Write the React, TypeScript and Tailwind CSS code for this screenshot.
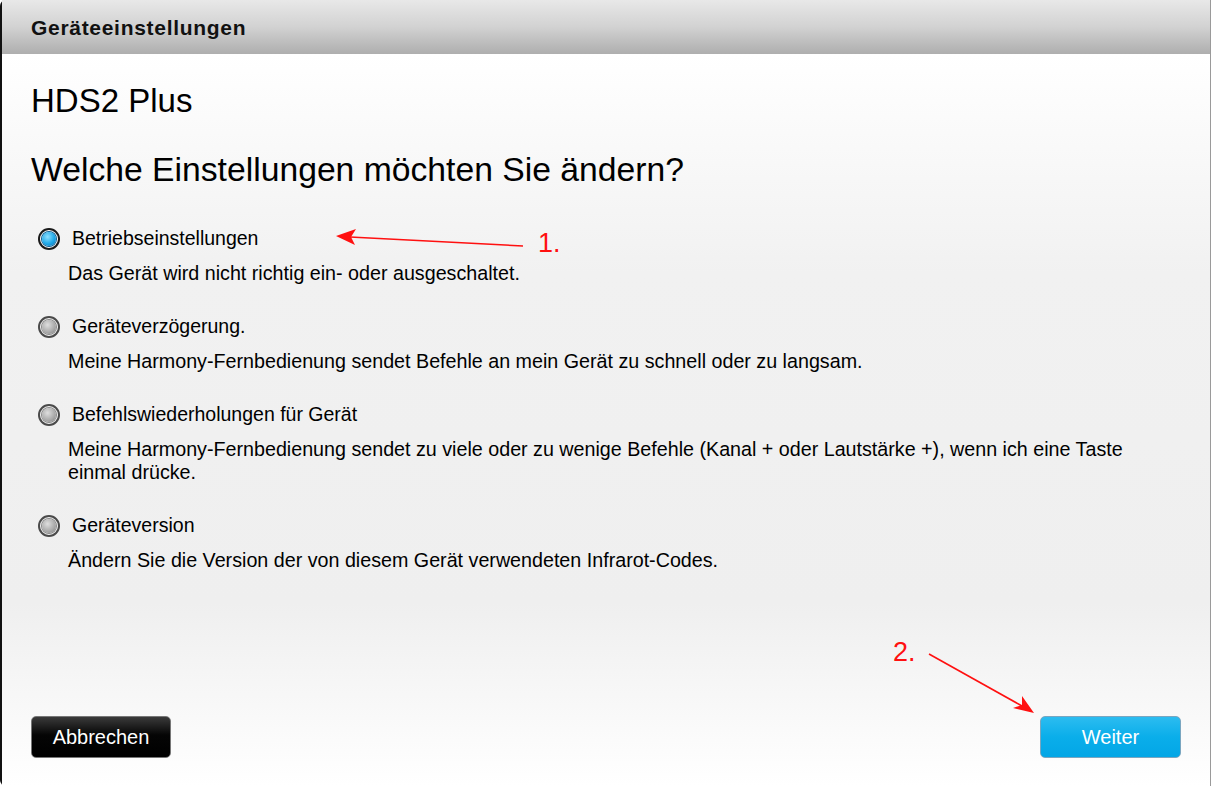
import React from "react";

type Option = {
  label: string;
  desc: string;
  selected?: boolean;
};

const options: Option[] = [
  {
    label: "Betriebseinstellungen",
    desc: "Das Gerät wird nicht richtig ein- oder ausgeschaltet.",
    selected: true,
  },
  {
    label: "Geräteverzögerung.",
    desc: "Meine Harmony-Fernbedienung sendet Befehle an mein Gerät zu schnell oder zu langsam.",
  },
  {
    label: "Befehlswiederholungen für Gerät",
    desc: "Meine Harmony-Fernbedienung sendet zu viele oder zu wenige Befehle (Kanal + oder Lautstärke +), wenn ich eine Taste einmal drücke.",
  },
  {
    label: "Geräteversion",
    desc: "Ändern Sie die Version der von diesem Gerät verwendeten Infrarot-Codes.",
  },
];

const Radio = ({ selected }: { selected?: boolean }) => (
  <span
    className={
      "flex h-[22px] w-[22px] items-center justify-center rounded-full border-2 " +
      (selected ? "border-[#1a1a1a] bg-white" : "border-[#4a4a4a] bg-[#f2f2f2]")
    }
  >
    <span
      className={
        "h-[14px] w-[14px] rounded-full " +
        (selected
          ? "bg-[radial-gradient(circle_at_40%_35%,#8fe0ff_0%,#1ea8e8_55%,#0a70b0_100%)] shadow-[0_0_0_1px_#0a5f95]"
          : "bg-[radial-gradient(circle_at_40%_35%,#dedede_0%,#a8a8a8_60%,#7c7c7c_100%)] shadow-[0_0_0_1px_#8a8a8a]")
      }
    />
  </span>
);

export default function App() {
  return (
    <div className="relative h-[786px] w-[1211px] overflow-hidden bg-white font-['Liberation_Sans',Arial,sans-serif] text-black">
      <div className="flex h-full flex-col rounded-tl-[6px] rounded-bl-[6px] border-l-2 border-r border-l-[#111] border-r-[#9a9a9a]">
        {/* header */}
        <div className="flex h-[54px] shrink-0 items-center bg-gradient-to-b from-[#e8e8e8] via-[#d2d2d2] to-[#aeaeae] pl-[29px] pt-[1px]">
          <span className="text-[21px] font-bold tracking-[0.7px] text-[#111]">Geräteeinstellungen</span>
        </div>

        {/* body */}
        <div className="flex flex-1 flex-col bg-[linear-gradient(to_bottom,#ffffff_0%,#f1f1f1_30%,#efefef_75%,#ffffff_100%)] px-[29px]">
          <h1 className="mt-[29px] text-[33px] leading-[36px]">HDS2 Plus</h1>
          <h2 className="mt-[31px] text-[33.7px] leading-[38px]">Welche Einstellungen möchten Sie ändern?</h2>

          <div className="mt-[39px] flex flex-col gap-[30px]">
            {options.map((o) => (
              <div key={o.label} className="flex flex-col">
                <div className="flex items-center gap-[12px] pl-[7px]">
                  <Radio selected={o.selected} />
                  <span className="text-[19.5px] leading-[23px]">{o.label}</span>
                </div>
                <p className="mt-[12px] pl-[37px] pr-[30px] text-[19.7px] leading-[23px]">{o.desc}</p>
              </div>
            ))}
          </div>

          <div className="mt-auto mb-[28px] flex items-center justify-between">
            <button className="h-[42px] w-[140px] rounded-[5px] border border-[#777] bg-[linear-gradient(to_bottom,#3a3a3a_0%,#050505_45%,#000000_100%)] text-[20px] text-white">
              Abbrechen
            </button>
            <button className="h-[42px] w-[141px] rounded-[5px] border border-[#7aa6c0] bg-[linear-gradient(to_bottom,#2cbcf0_0%,#0aaeea_50%,#03a6e6_100%)] text-[20px] text-white">
              Weiter
            </button>
          </div>
        </div>
      </div>

      {/* annotations */}
      <svg className="pointer-events-none absolute left-0 top-0" width="1211" height="786">
        <line x1="523" y1="246" x2="350" y2="237" stroke="#ff1010" strokeWidth="1.6" />
        <polygon points="336,236 356,229 351,237 355,245" fill="#ff1010" />
        <line x1="929" y1="654" x2="1022" y2="706" stroke="#ff1010" strokeWidth="1.6" />
        <polygon points="1034,713 1013,708 1022,705 1022,696" fill="#ff1010" />
      </svg>
      <span className="absolute left-[538px] top-[230px] text-[27px] leading-none text-[#ff1010]">1.</span>
      <span className="absolute left-[893px] top-[639px] text-[27px] leading-none text-[#ff1010]">2.</span>
    </div>
  );
}
